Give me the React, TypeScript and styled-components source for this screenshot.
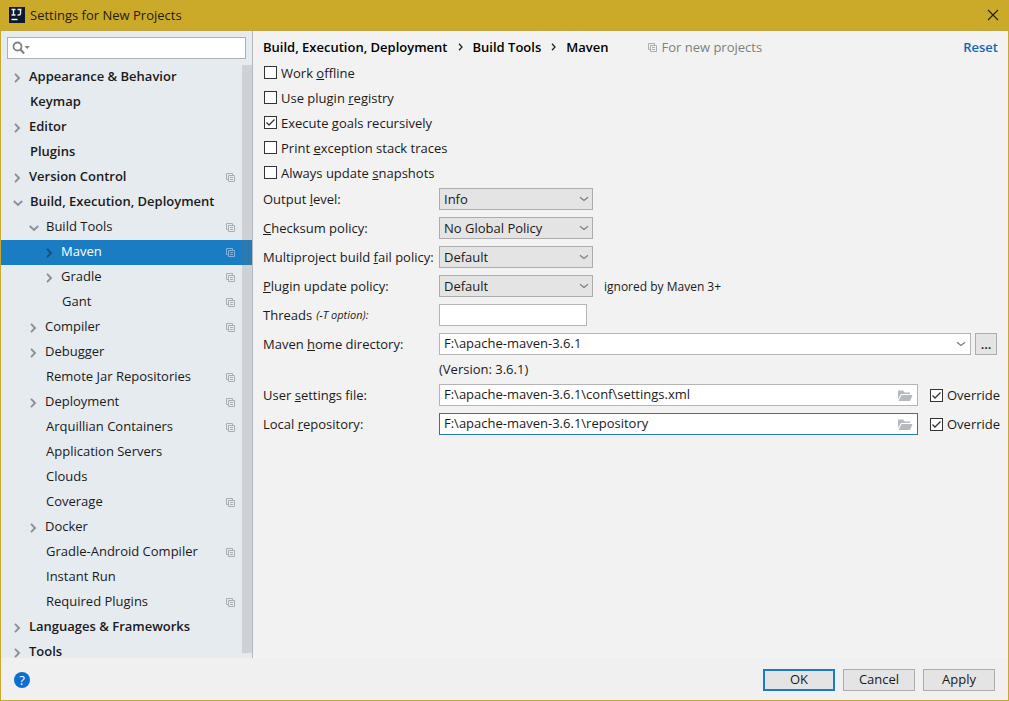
import React, { useState } from "react";
import styled, { createGlobalStyle, css } from "styled-components";

const GlobalStyle = createGlobalStyle`
  *, *::before, *::after { box-sizing: border-box; }
  body { margin: 0; }
  body, button, input, select {
    font-family: "Open Sans", "Noto Sans", sans-serif;
    font-size: 13px;
    line-height: 18px;
    color: #1a1a1a;
  }
  button { cursor: pointer; }
`;

const Window = styled.div`
  display: flex;
  flex-direction: column;
  height: 100vh;
  background: #f2f2f2;
  border: 1px solid #c9a92d;
  border-top: 0;
`;

const TitleBar = styled.header`
  display: flex;
  flex: none;
  align-items: center;
  height: 31px;
  padding: 0 9px 0 8px;
  gap: 5px;
  background: #cbaa29;
  border-bottom: 1px solid #bfa546;
`;

const WindowTitle = styled.h1`
  flex: 1;
  margin: 0;
  font-size: 13px;
  font-weight: 400;
  color: #241d05;
`;

const CloseButton = styled.button`
  display: flex;
  padding: 0;
  border: 0;
  background: none;
`;

const Body = styled.div`
  display: flex;
  flex: 1;
  min-height: 0;
`;

const Sidebar = styled.aside`
  display: flex;
  flex: none;
  flex-direction: column;
  width: 252px;
  background: #e6ebf0;
  border-right: 1px solid #b4b8bc;
`;

const SearchBox = styled.label`
  display: flex;
  flex: none;
  align-items: center;
  height: 22px;
  margin: 6px;
  padding: 0 4px;
  background: #fff;
  border: 1px solid #adb1b5;
`;

const SearchInput = styled.input`
  flex: 1;
  min-width: 0;
  padding: 0 4px;
  border: 0;
  outline: 0;
  background: none;
`;

const TreeArea = styled.nav`
  position: relative;
  flex: 1;
  min-height: 0;
  overflow: hidden;
`;

const Tree = styled.ul`
  margin: 0;
  padding: 0;
  list-style: none;
`;

const ScrollThumb = styled.div`
  position: absolute;
  top: 0;
  right: 0;
  bottom: 5px;
  width: 10px;
  background: rgba(110, 110, 110, 0.2);
`;

const TreeRow = styled.button<{ $level: number; $selected: boolean; $closed: boolean }>`
  display: flex;
  align-items: center;
  gap: 6px;
  width: 100%;
  height: 25px;
  padding: 0 17px 0 ${(p) => (p.$closed ? 10 : 11) + p.$level * 16}px;
  border: 0;
  text-align: left;
  font-weight: ${(p) => (p.$level === 0 ? 600 : 400)};
  background: ${(p) => (p.$selected ? "#1a7dc4" : "transparent")};
  color: ${(p) => (p.$selected ? "#fff" : "#1a1a1a")};
`;

const ArrowSlot = styled.span`
  display: flex;
  flex: none;
  justify-content: center;
  width: 12px;
`;

const RowText = styled.span`
  flex: 1;
  padding-bottom: 3px;
  white-space: nowrap;
`;

const Panel = styled.main`
  flex: 1;
  min-width: 0;
  padding: 5px 10px 0 10px;
`;

const PanelHeader = styled.div`
  display: flex;
  align-items: center;
  height: 22px;
  margin-bottom: 2px;
  white-space: nowrap;
`;

const Breadcrumbs = styled.ol`
  display: flex;
  gap: 10px;
  margin: 0;
  padding: 0;
  list-style: none;
  font-weight: 600;
  color: #000;
`;

const Crumb = styled.li`
  display: flex;
  align-items: center;
  gap: 10px;
`;

const ScopeNote = styled.span`
  display: flex;
  flex: 1;
  align-items: center;
  gap: 4px;
  margin-left: 40px;
  color: #808080;
`;

const ResetLink = styled.a`
  font-weight: 600;
  color: #1864b4;
  text-decoration: none;
`;

const CheckList = styled.div`
  display: flex;
  flex-direction: column;
  margin: 0 0 3px 1px;
`;

const CheckLabel = styled.label<{ $tall?: boolean }>`
  display: flex;
  align-items: center;
  gap: 4px;
  height: ${(p) => (p.$tall ? 25 : 22)}px;
  white-space: nowrap;
`;

const CheckBox = styled.input`
  flex: none;
  appearance: none;
  width: 13px;
  height: 13px;
  margin: 0;
  border: 1px solid #333;
  background: #fff;
`;

const CheckSlot = styled.span`
  position: relative;
  display: flex;
`;

const CheckMark = styled.svg`
  position: absolute;
  inset: 0;
  pointer-events: none;
`;

const Form = styled.form`
  display: grid;
  grid-template-columns: 169px minmax(0, 1fr);
  column-gap: 7px;
  row-gap: 7px;
`;

const FieldLabel = styled.label`
  display: flex;
  align-items: center;
  gap: 4px;
  height: 22px;
  white-space: nowrap;
`;

const LabelHint = styled.i`
  font-size: 11px;
`;

const Field = styled.div`
  display: flex;
  align-items: center;
  min-width: 0;
`;

const SelectBox = styled.span`
  position: relative;
  display: flex;
  width: 154px;
`;

const Select = styled.select`
  appearance: none;
  width: 100%;
  height: 22px;
  padding: 0 20px 0 4px;
  border: 1px solid #adadad;
  border-radius: 0;
  background: #e4e4e4;
`;

const SelectArrow = styled.span`
  position: absolute;
  top: 0;
  right: 4px;
  bottom: 0;
  display: flex;
  align-items: center;
  pointer-events: none;
`;

const FieldNote = styled.span<{ $inset?: boolean }>`
  margin-left: ${(p) => (p.$inset ? 11 : 0)}px;
  font-size: ${(p) => (p.$inset ? 12 : 13)}px;
  line-height: 15px;
`;

const ShortInput = styled.input`
  width: 148px;
  height: 22px;
  padding: 0 4px;
  border: 1px solid #b4b4b4;
  background: #fff;
`;

const PathBox = styled.span<{ $focused?: boolean }>`
  display: flex;
  flex: 1;
  align-items: center;
  min-width: 0;
  height: 22px;
  padding-right: 4px;
  background: #fff;
  border: 1px solid #b4b4b4;
  ${(p) =>
    p.$focused &&
    css`
      border-color: #2675bf;
    `}
`;

const PathInput = styled.input`
  flex: 1;
  min-width: 0;
  height: 20px;
  padding: 0 4px 2px;
  border: 0;
  outline: 0;
  background: none;
`;

const InlineButton = styled.button`
  display: flex;
  padding: 0;
  border: 0;
  background: none;
`;

const BrowseButton = styled.button`
  width: 22px;
  height: 22px;
  margin: 0 1px 0 4px;
  padding: 0;
  border: 1px solid #adadad;
  background: #e4e4e4;
  font-weight: 600;
  line-height: 16px;
`;

const OverrideSlot = styled.span`
  flex: none;
  width: 68px;
  margin-left: 12px;
`;

const Footer = styled.footer`
  display: flex;
  flex: none;
  align-items: center;
  gap: 8px;
  height: 42px;
  padding: 2px 13px 0;
  background: #f0f0f0;
`;

const HelpButton = styled.button`
  display: flex;
  align-items: center;
  justify-content: center;
  width: 16px;
  height: 16px;
  margin-right: auto;
  padding: 0;
  border: 0;
  border-radius: 50%;
  background: #0a6fd0;
  color: #fff;
`;

const DialogButton = styled.button<{ $primary?: boolean }>`
  width: 72px;
  height: 22px;
  padding: 0 0 2px;
  line-height: 16px;
  background: #e4e4e4;
  border: ${(p) => (p.$primary ? "2px solid #1a7dc4" : "1px solid #adadad")};
`;

function Chevron({ open, color = "#8c9094" }: { open?: boolean; color?: string }) {
  return open ? (
    <svg width="10" height="10" viewBox="0 0 10 10" fill="none" stroke={color} strokeWidth="1.9">
      <path d="M.8 3 5 7 9.2 3" />
    </svg>
  ) : (
    <svg width="10" height="10" viewBox="0 0 10 10" fill="none" stroke={color} strokeWidth="1.9">
      <path d="M3 .8 7 5 3 9.2" />
    </svg>
  );
}

function DownArrow() {
  return (
    <svg width="10" height="8" viewBox="0 0 10 8" fill="none" stroke="#7c7c7c" strokeWidth="1.2">
      <path d="M1 2.2 5 5.5 9 2.2" />
    </svg>
  );
}

function CrumbArrow() {
  return (
    <svg width="5" height="8" viewBox="0 0 5 8" fill="none" stroke="#222" strokeWidth="1.3">
      <path d="M1 .8 4 4 1 7.2" />
    </svg>
  );
}

function ScopeIcon({ color = "#a9aeb3" }: { color?: string }) {
  return (
    <svg width="9" height="9" viewBox="0 0 9 9" fill="none" stroke={color}>
      <path d="M2 6.5H.5V.5H6.5V2M2.5 2.5H8.5V8.5H2.5ZM4 4.5H7M4 6.5H7" />
    </svg>
  );
}

function FolderIcon() {
  return (
    <svg width="16" height="13" viewBox="0 0 16 13" fill="#b6babe">
      <path d="M1 1.5H6L7.5 3.5H13V5H4L1 10Z" />
      <path d="M4.5 6H15.5L13 12H1.5Z" />
    </svg>
  );
}

function Tick({ label, accel, rest, checked, tall }: {
  label: string; accel?: string; rest?: string; checked?: boolean; tall?: boolean;
}) {
  const [on, setOn] = useState(!!checked);
  return (
    <CheckLabel $tall={tall}>
      <CheckSlot>
        <CheckBox type="checkbox" checked={on} onChange={() => setOn(!on)} />
        {on && (
          <CheckMark width="13" height="13" viewBox="0 0 13 13" fill="none" stroke="#333" strokeWidth="1.3">
            <path d="M2.5 6.5 5 9 10.5 3.5" />
          </CheckMark>
        )}
      </CheckSlot>
      <span>{label}{accel && <u>{accel}</u>}{rest}</span>
    </CheckLabel>
  );
}

type Node = { name: string; level: number; arrow?: "open" | "closed"; scoped?: boolean };

const nodes: Node[] = [
  { name: "Appearance & Behavior", level: 0, arrow: "closed" },
  { name: "Keymap", level: 0 },
  { name: "Editor", level: 0, arrow: "closed" },
  { name: "Plugins", level: 0 },
  { name: "Version Control", level: 0, arrow: "closed", scoped: true },
  { name: "Build, Execution, Deployment", level: 0, arrow: "open" },
  { name: "Build Tools", level: 1, arrow: "open", scoped: true },
  { name: "Maven", level: 2, arrow: "closed", scoped: true },
  { name: "Gradle", level: 2, arrow: "closed", scoped: true },
  { name: "Gant", level: 2, scoped: true },
  { name: "Compiler", level: 1, arrow: "closed", scoped: true },
  { name: "Debugger", level: 1, arrow: "closed" },
  { name: "Remote Jar Repositories", level: 1, scoped: true },
  { name: "Deployment", level: 1, arrow: "closed", scoped: true },
  { name: "Arquillian Containers", level: 1, scoped: true },
  { name: "Application Servers", level: 1 },
  { name: "Clouds", level: 1 },
  { name: "Coverage", level: 1, scoped: true },
  { name: "Docker", level: 1, arrow: "closed" },
  { name: "Gradle-Android Compiler", level: 1, scoped: true },
  { name: "Instant Run", level: 1 },
  { name: "Required Plugins", level: 1, scoped: true },
  { name: "Languages & Frameworks", level: 0, arrow: "closed" },
  { name: "Tools", level: 0, arrow: "closed" },
];

const policies = [
  { id: "output", before: "Output ", accel: "l", after: "evel:", value: "Info" },
  { id: "checksum", before: "", accel: "C", after: "hecksum policy:", value: "No Global Policy" },
  { id: "fail", before: "Multiproject build ", accel: "f", after: "ail policy:", value: "Default" },
  { id: "update", before: "", accel: "P", after: "lugin update policy:", value: "Default", note: "ignored by Maven 3+" },
];

const paths = [
  { id: "settings", before: "User ", accel: "s", after: "ettings file:", value: "F:\\apache-maven-3.6.1\\conf\\settings.xml" },
  { id: "repository", before: "Local ", accel: "r", after: "epository:", value: "F:\\apache-maven-3.6.1\\repository", focused: true },
];

export default function App() {
  const [selected, setSelected] = useState("Maven");
  return (
    <>
      <GlobalStyle />
      <Window>
        <TitleBar>
          <svg width="16" height="16" viewBox="0 0 16 16" aria-hidden="true">
            <rect width="16" height="16" fill="#0d1a2b" />
            <path d="M2.5 2.5H6.5M4.5 2.5V8M2.5 8H6.5M8.5 2.5H12.5M11.5 2.5V6.5Q11.5 8 10 8H8.5" fill="none" stroke="#e8edf2" strokeWidth="1.4" />
            <path d="M2.5 12.5H8.5" stroke="#fff" strokeWidth="1.4" />
          </svg>
          <WindowTitle>Settings for New Projects</WindowTitle>
          <CloseButton aria-label="Close">
            <svg width="12" height="12" viewBox="0 0 12 12" stroke="#241d05" strokeWidth="1.1">
              <path d="M1 1 11 11M11 1 1 11" />
            </svg>
          </CloseButton>
        </TitleBar>

        <Body>
          <Sidebar>
            <SearchBox>
              <svg width="19" height="14" viewBox="0 0 19 14" fill="none">
                <circle cx="5.5" cy="5.5" r="4" stroke="#7f8386" strokeWidth="1.8" />
                <path d="M8.5 8.5 12 12.5" stroke="#7f8386" strokeWidth="2.2" />
                <path d="M12.5 5H18L15.2 8Z" fill="#7f8386" />
              </svg>
              <SearchInput type="text" aria-label="Search settings" />
            </SearchBox>
            <TreeArea aria-label="Settings">
              <Tree>
                {nodes.map((n) => {
                  const isSelected = n.name === selected;
                  return (
                    <li key={n.name}>
                      <TreeRow
                        $level={n.level}
                        $selected={isSelected}
                        $closed={n.arrow === "closed"}
                        onClick={() => setSelected(n.name)}
                      >
                        <ArrowSlot>
                          {n.arrow && <Chevron open={n.arrow === "open"} color={isSelected ? "#1b4d78" : undefined} />}
                        </ArrowSlot>
                        <RowText>{n.name}</RowText>
                        {n.scoped && <ScopeIcon color={isSelected ? "#7fb3dc" : undefined} />}
                      </TreeRow>
                    </li>
                  );
                })}
              </Tree>
              <ScrollThumb />
            </TreeArea>
          </Sidebar>

          <Panel>
            <PanelHeader>
              <Breadcrumbs>
                <Crumb>Build, Execution, Deployment <CrumbArrow /></Crumb>
                <Crumb>Build Tools <CrumbArrow /></Crumb>
                <Crumb>Maven</Crumb>
              </Breadcrumbs>
              <ScopeNote><ScopeIcon />For new projects</ScopeNote>
              <ResetLink href="#reset">Reset</ResetLink>
            </PanelHeader>

            <CheckList>
              <Tick tall label="Work " accel="o" rest="ffline" />
              <Tick tall label="Use plugin " accel="r" rest="egistry" />
              <Tick tall label="Execute " accel="g" rest="oals recursively" checked />
              <Tick tall label="Print " accel="e" rest="xception stack traces" />
              <Tick tall label="Always update " accel="s" rest="napshots" />
            </CheckList>

            <Form onSubmit={(e) => e.preventDefault()}>
              {policies.map((p) => (
                <React.Fragment key={p.id}>
                  <FieldLabel htmlFor={p.id}>
                    <span>{p.before}<u>{p.accel}</u>{p.after}</span>
                  </FieldLabel>
                  <Field>
                    <SelectBox>
                      <Select id={p.id} defaultValue={p.value}>
                        <option>{p.value}</option>
                      </Select>
                      <SelectArrow><DownArrow /></SelectArrow>
                    </SelectBox>
                    {p.note && <FieldNote $inset>{p.note}</FieldNote>}
                  </Field>
                </React.Fragment>
              ))}

              <FieldLabel htmlFor="threads">Threads <LabelHint>(-T option):</LabelHint></FieldLabel>
              <Field><ShortInput id="threads" type="text" /></Field>

              <FieldLabel htmlFor="home"><span>Maven <u>h</u>ome directory:</span></FieldLabel>
              <Field>
                <PathBox>
                  <PathInput id="home" type="text" defaultValue={"F:\\apache-maven-3.6.1"} />
                  <InlineButton type="button" aria-label="Show directories"><DownArrow /></InlineButton>
                </PathBox>
                <BrowseButton type="button">...</BrowseButton>
              </Field>

              <span />
              <FieldNote>(Version: 3.6.1)</FieldNote>

              {paths.map((p) => (
                <React.Fragment key={p.id}>
                  <FieldLabel htmlFor={p.id}>
                    <span>{p.before}<u>{p.accel}</u>{p.after}</span>
                  </FieldLabel>
                  <Field>
                    <PathBox $focused={p.focused}>
                      <PathInput id={p.id} type="text" defaultValue={p.value} />
                      <InlineButton type="button" aria-label="Browse"><FolderIcon /></InlineButton>
                    </PathBox>
                    <OverrideSlot><Tick label="Override" checked /></OverrideSlot>
                  </Field>
                </React.Fragment>
              ))}
            </Form>
          </Panel>
        </Body>

        <Footer>
          <HelpButton aria-label="Help">?</HelpButton>
          <DialogButton $primary>OK</DialogButton>
          <DialogButton>Cancel</DialogButton>
          <DialogButton>Apply</DialogButton>
        </Footer>
      </Window>
    </>
  );
}
